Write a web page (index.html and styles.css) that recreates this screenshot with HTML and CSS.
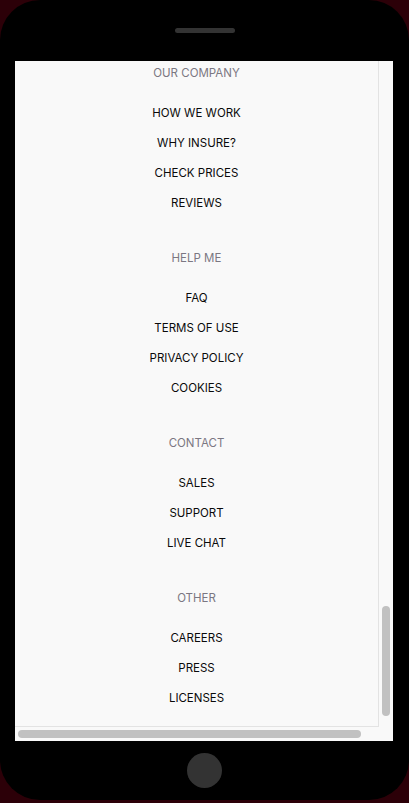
FILE: index.html
```html
<!DOCTYPE html>
<html>
<head>
<meta charset="utf-8">
<link rel="stylesheet" href="styles.css">
</head>
<body>
<div class="phone">
  <div class="phone-top"><div class="speaker"></div></div>
  <div class="screen">
    <div class="content">
      <div class="section">
        <div class="heading">OUR COMPANY</div>
        <a class="link">HOW WE WORK</a>
        <a class="link">WHY INSURE?</a>
        <a class="link">CHECK PRICES</a>
        <a class="link">REVIEWS</a>
      </div>
      <div class="section">
        <div class="heading">HELP ME</div>
        <a class="link">FAQ</a>
        <a class="link">TERMS OF USE</a>
        <a class="link">PRIVACY POLICY</a>
        <a class="link">COOKIES</a>
      </div>
      <div class="section">
        <div class="heading">CONTACT</div>
        <a class="link">SALES</a>
        <a class="link">SUPPORT</a>
        <a class="link">LIVE CHAT</a>
      </div>
      <div class="section">
        <div class="heading">OTHER</div>
        <a class="link">CAREERS</a>
        <a class="link">PRESS</a>
        <a class="link">LICENSES</a>
      </div>
    </div>
    <div class="vtrack"><div class="vthumb"></div></div>
    <div class="htrack"><div class="hthumb"></div></div>
    <div class="corner"></div>
  </div>
  <div class="phone-bottom"><div class="home"></div></div>
</div>
</body>
</html>
```
FILE: styles.css
```css
html, body {
  margin: 0;
  padding: 0;
  background: #2c0008;
}
body {
  width: 409px;
  height: 803px;
  overflow: hidden;
}
.phone {
  width: 409px;
  height: 800px;
  background: #000;
  border-radius: 40px;
  display: flex;
  flex-direction: column;
}
.phone-top {
  height: 61px;
  display: flex;
  justify-content: center;
  padding-top: 28px;
  box-sizing: border-box;
}
.speaker {
  width: 60px;
  height: 5px;
  border-radius: 3px;
  background: #333;
}
.screen {
  margin-left: 15px;
  width: 378px;
  height: 680px;
  background: #f9f9f9;
  display: grid;
  grid-template-columns: 364px 14px;
  grid-template-rows: 666px 14px;
  overflow: hidden;
}
.content {
  border-right: 1px solid #e3e3e3;
  border-bottom: 1px solid #e3e3e3;
  display: flex;
  flex-direction: column;
  align-items: center;
  gap: 30px;
  padding-top: 2px;
  font-family: Inter, "Liberation Sans", sans-serif;
  font-size: 11.5px;
  overflow: hidden;
}
.section {
  display: flex;
  flex-direction: column;
  align-items: center;
}
.heading {
  line-height: 20px;
  color: #7b7782;
  margin-bottom: 15px;
}
.link {
  line-height: 30px;
  color: #0a0a0a;
}
.vtrack {
  padding: 545px 0 0 3px;
}
.vthumb {
  width: 8px;
  height: 110px;
  border-radius: 4px;
  background: #c1c1c1;
}
.htrack {
  padding: 3px 0 0 3px;
}
.hthumb {
  width: 343px;
  height: 8px;
  border-radius: 4px;
  background: #c1c1c1;
}
.phone-bottom {
  flex: 1;
  display: flex;
  justify-content: center;
  padding-top: 12px;
}
.home {
  width: 35px;
  height: 35px;
  border-radius: 50%;
  background: #333;
}
```
